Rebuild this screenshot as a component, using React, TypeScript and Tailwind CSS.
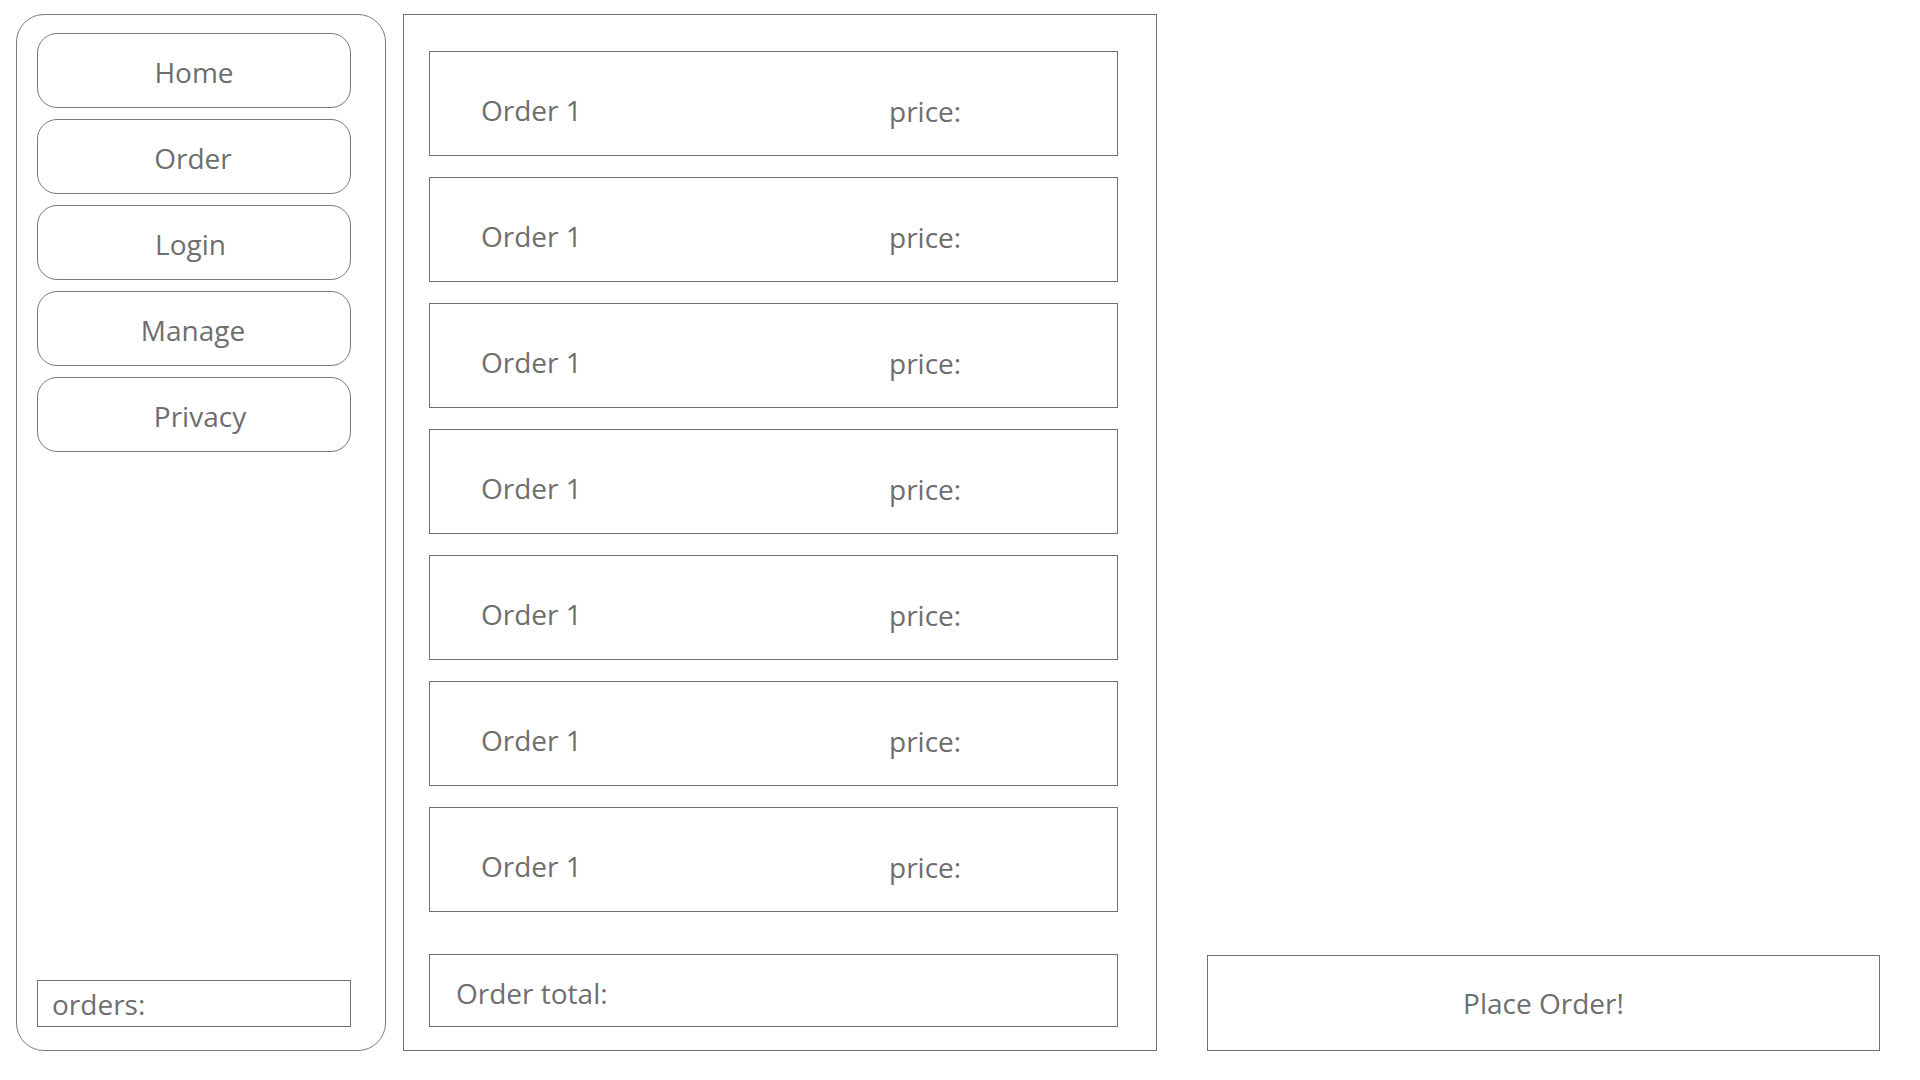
import React from "react";

// small per-item nudges, the labels in the mockup aren't perfectly centred
const navItems = [
  { label: "Home", nudge: "" },
  { label: "Order", nudge: "pr-[2px]" },
  { label: "Login", nudge: "pr-[7px]" },
  { label: "Manage", nudge: "pr-[2px]" },
  { label: "Privacy", nudge: "pl-[12px]" },
];
const orders = Array.from({ length: 7 }, () => ({ name: "Order 1", price: "" }));

function Sidebar() {
  return (
    <aside className="flex h-[1037px] w-[370px] shrink-0 flex-col rounded-[28px] border border-[#7a7a7a] px-[20px] pt-[18px] pb-[23px]">
      <nav className="flex flex-col gap-[11px]">
        {navItems.map((item) => (
          <button
            key={item.label}
            className={`flex h-[75px] w-[314px] items-center justify-center rounded-[20px] border border-[#7a7a7a] pt-[3px] text-[28px] text-[#6e6e6e] ${item.nudge}`}
          >
            {item.label}
          </button>
        ))}
      </nav>
      <div className="mt-auto flex h-[47px] w-[314px] items-center border border-[#707070] pl-[14px] text-[28px] text-[#6e6e6e]">
        orders:
      </div>
    </aside>
  );
}

function OrderList() {
  return (
    <section className="flex h-[1037px] w-[754px] shrink-0 flex-col border border-[#707070] pl-[25px] pt-[36px] pb-[23px]">
      <div className="flex flex-col gap-[21px]">
        {orders.map((order, i) => (
          <div
            key={i}
            className="flex h-[105px] w-[689px] items-center border border-[#707070] pl-[51px] pt-[13px] text-[28px] text-[#6e6e6e]"
          >
            <span className="w-[408px]">{order.name}</span>
            <span className="pt-[2px]">price:{order.price}</span>
          </div>
        ))}
      </div>
      <div className="mt-auto flex h-[73px] w-[689px] items-center border border-[#707070] pl-[26px] pt-[4px] text-[28px] text-[#6e6e6e]">
        Order total:
      </div>
    </section>
  );
}

export default function App() {
  return (
    <div
      className="flex h-screen w-full bg-white pl-[16px] pt-[14px]"
      style={{ fontFamily: '"Open Sans", "Noto Sans", sans-serif' }}
    >
      <Sidebar />
      <div className="ml-[17px]">
        <OrderList />
      </div>
      <div className="ml-[50px] flex h-[1037px] flex-col justify-end">
        <button className="flex h-[96px] w-[673px] items-center justify-center border border-[#707070] text-[28px] text-[#6e6e6e]">
          Place Order!
        </button>
      </div>
    </div>
  );
}
